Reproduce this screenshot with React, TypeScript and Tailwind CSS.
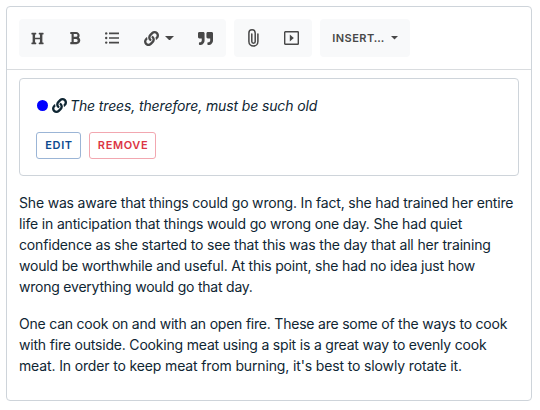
import type { ReactNode } from "react";
import { FaHeading, FaBold, FaLink, FaQuoteRight } from "react-icons/fa";

function ToolGroup({ className, children }: { className: string; children: ReactNode }) {
  return <div className={`flex h-[38px] items-center rounded bg-[#f8f9fa] text-[#484848] ${className}`}>{children}</div>;
}

function Tool({ label, className, children }: { label: string; className: string; children: ReactNode }) {
  return (
    <button type="button" aria-label={label} className={`flex h-full items-center justify-center ${className}`}>
      {children}
    </button>
  );
}

function Caret({ className }: { className: string }) {
  return (
    <svg viewBox="0 0 8 4" className={className} fill="currentColor">
      <path d="M0 0h8L4 4z" />
    </svg>
  );
}

function ListIcon() {
  return (
    <svg viewBox="0 0 14 12" className="h-3 w-3.5" fill="currentColor">
      <circle cx="1.2" cy="1.4" r="1.2" />
      <circle cx="1.2" cy="6" r="1.2" />
      <circle cx="1.2" cy="10.6" r="1.2" />
      <path d="M4 .6H14v1.6H4zM4 5.2H14v1.6H4zM4 9.8H14v1.6H4z" />
    </svg>
  );
}

function ClipIcon() {
  return (
    <svg viewBox="0 0 11 18" className="h-[18px] w-[11px]" fill="none" stroke="currentColor" strokeWidth="1.5" strokeLinecap="round">
      <path d="M9.9 5v7.6a4.5 4.5 0 0 1-9 0V4a3.1 3.1 0 0 1 6.3 0v8.5a1.7 1.7 0 0 1-3.4 0V5" />
    </svg>
  );
}

function MediaIcon() {
  return (
    <svg viewBox="0 0 15 14" className="h-3.5 w-[15px]" fill="none">
      <rect x=".7" y=".7" width="13.6" height="12.6" rx=".6" stroke="currentColor" strokeWidth="1.4" />
      <path d="M5.8 3.6 9.8 7l-4 3.4z" fill="currentColor" />
    </svg>
  );
}

export default function App() {
  return (
    <div className="h-[410px] w-[540px] bg-white p-1.5 font-['Inter','Liberation_Sans',sans-serif] text-[#0f2633]">
      <div className="h-[395px] w-[526px] rounded border border-[#ced4da]">
        <div className="flex h-[63px] gap-2 border-b border-[#d9dcdf] px-3 pt-3">
          <ToolGroup className="w-[207px]">
            <Tool label="Heading" className="w-[37px]"><FaHeading className="size-[13px]" /></Tool>
            <Tool label="Bold" className="w-[37px]"><FaBold className="size-3.5" /></Tool>
            <Tool label="List" className="w-[38px]"><ListIcon /></Tool>
            <Tool label="Link" className="w-[55px] gap-1.5"><FaLink className="size-[15px]" /><Caret className="h-[4.5px] w-[9px]" /></Tool>
            <Tool label="Quote" className="w-[39px]"><FaQuoteRight className="size-[15px]" /></Tool>
          </ToolGroup>
          <ToolGroup className="w-[78px]">
            <Tool label="Attach" className="w-[39px]"><ClipIcon /></Tool>
            <Tool label="Media" className="w-[37px]"><MediaIcon /></Tool>
          </ToolGroup>
          <ToolGroup className="w-[90px]">
            <Tool label="Insert" className="w-full gap-1.5 text-[11px] font-semibold">
              <span className="tracking-[0.5px]">INSERT…</span><Caret className="h-[3.5px] w-[7px]" />
            </Tool>
          </ToolGroup>
        </div>
        <div className="px-3 pt-2 text-sm leading-[21px]">
          <div className="h-[98px] rounded border border-[#ced4da] px-4 pt-4">
            <div className="flex items-center">
              <span className="ml-px size-[11px] rounded-full bg-[#0000ff]" />
              <FaLink className="ml-1 size-[15px]" />
              <em className="ml-[3px] tracking-[-0.13px]">The trees, therefore, must be such old</em>
            </div>
            <div className="mt-4 flex gap-2 text-[11px] font-semibold leading-none">
              <button type="button" className="h-[27px] w-[45px] rounded-[3px] border border-[#9bb5d6] pl-px tracking-[0.6px] text-[#0b4a8f]">EDIT</button>
              <button type="button" className="h-[27px] w-[67px] rounded-[3px] border border-[#f2a7b0] pl-px tracking-[0.6px] text-[#dc3545]">REMOVE</button>
            </div>
          </div>
          <p className="mt-4 whitespace-nowrap">
            <span className="tracking-[-0.182px]">She was aware that things could go wrong. In fact, she had trained her entire</span><br />
            <span className="tracking-[-0.171px]">life in anticipation that things would go wrong one day. She had quiet</span><br />
            <span className="tracking-[-0.158px]">confidence as she started to see that this was the day that all her training</span><br />
            <span className="tracking-[-0.19px]">would be worthwhile and useful. At this point, she had no idea just how</span><br />
            <span className="tracking-[-0.22px]">wrong everything would go that day.</span>
          </p>
          <p className="mt-4 whitespace-nowrap">
            <span className="tracking-[-0.215px]">One can cook on and with an open fire. These are some of the ways to cook</span><br />
            <span className="tracking-[-0.19px]">with fire outside. Cooking meat using a spit is a great way to evenly cook</span><br />
            <span className="tracking-[-0.14px]">meat. In order to keep meat from burning, it's best to slowly rotate it.</span>
          </p>
        </div>
      </div>
    </div>
  );
}
